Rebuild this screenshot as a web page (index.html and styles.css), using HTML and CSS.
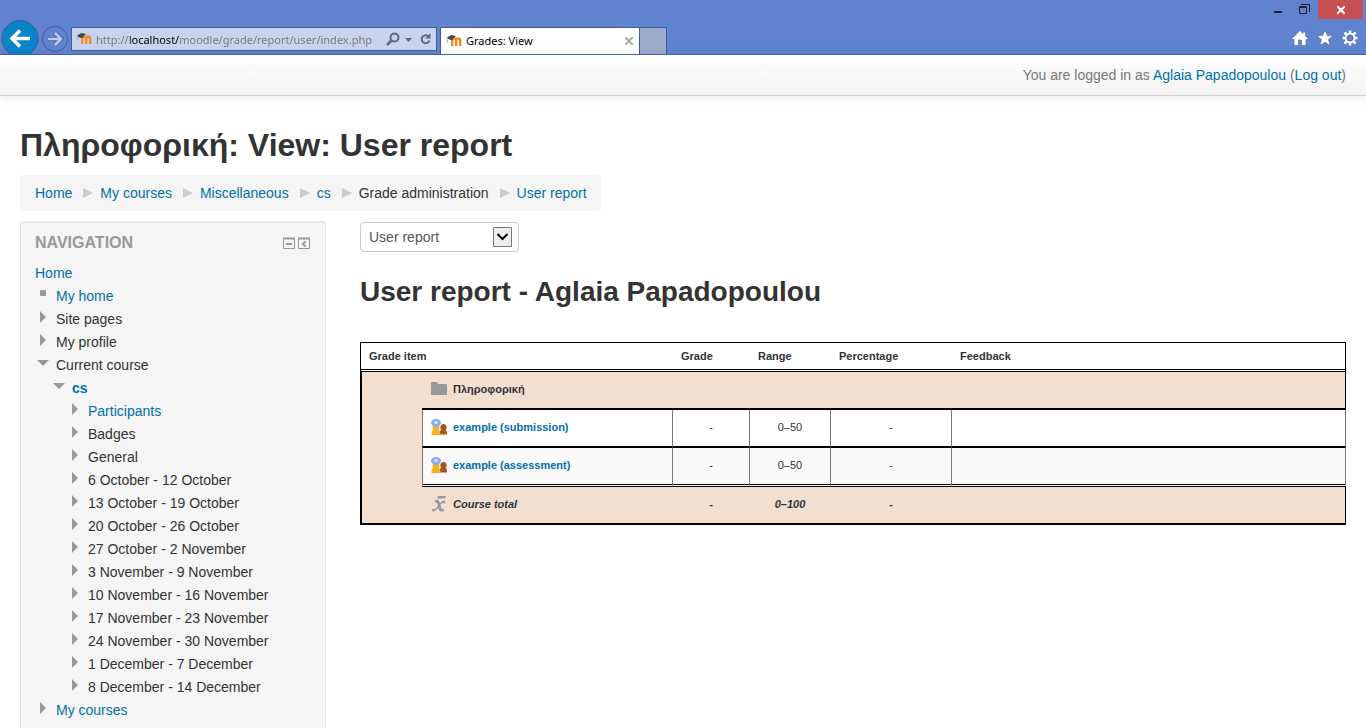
FILE: index.html
```html
<!DOCTYPE html>
<html lang="en">
<head>
    <meta charset="UTF-8">
    <meta name="viewport" content="width=device-width, initial-scale=1.0">
    <title>Grades: View</title>
    <link rel="stylesheet" href="styles.css">
</head>

<body>

    <!-- shared shapes -->
    <svg width="0" height="0" class="defs">
        <symbol id="moodle" viewBox="0 0 16 16">
            <path d="M6.200 13V7.500a2 2 0 0 1 4 0V13M10.200 7.500a2 2 0 0 1 4 0V13" fill="none" stroke="#f58a24" stroke-width="2.400"/>
            <path d="M1 4.500L5.500 2l4.500 1-3 2.500L6.500 7 3 6.500z" fill="#444"/>
            <path d="M1.500 5v5" stroke="#d9a989" fill="none"/>
        </symbol>
        <symbol id="closed" viewBox="0 0 12 12"><path d="M3 0l6 6-6 6z" fill="#999"/></symbol>
        <symbol id="open" viewBox="0 0 12 12"><path d="M0 3h12L6 9z" fill="#999"/></symbol>
        <symbol id="dot" viewBox="0 0 12 12"><rect x="3" y="2" width="6" height="6" rx="1" fill="#999"/></symbol>
        <symbol id="workshop" viewBox="0 0 16 16">
            <path d="M8 15.500c0-3 .500-4 2.500-4.500C8.500 9.500 9 5 12.500 5s4 4.500 2 6c1.500.500 1.500 2 1.500 4.500z" fill="#a8541c"/>
            <path d="M.500 16c0-3 .500-4.500 2-5C.500 9 2 5 5 5s4.500 4 2.500 6C9 11.500 9.500 13 9.500 16z" fill="#f5b21c"/>
            <ellipse cx="5" cy="3.800" rx="5" ry="3.800" fill="#86acee"/>
            <ellipse cx="5" cy="3.500" rx="2" ry="1.500" fill="#d3e2ff"/>
            <path d="M5 7l3 2.500V6z" fill="#86acee"/>
        </symbol>
    </svg>

    <header class="browser">
        <div class="toolbar">
            <button class="back" aria-label="Back">
                <svg width="38" height="34" viewBox="0 0 38 34">
                    <circle cx="19" cy="18.500" r="18" fill="#0a84c8" stroke="#3c5a9a"/>
                    <path d="M29 18.500H12M19 10.500l-8 8 8 8" fill="none" stroke="#fff" stroke-width="3.500"/>
                </svg>
            </button>
            <button class="forward" aria-label="Forward">
                <svg width="28" height="28" viewBox="0 0 28 28">
                    <circle cx="14" cy="13" r="12.500" fill="none" stroke="#3f5da3"/>
                    <path d="M7 13h12M14 7l6 6-6 6" fill="none" stroke="#46609e" stroke-width="4"/>
                    <path d="M7 13h12M14 7l6 6-6 6" fill="none" stroke="#b9cbf2" stroke-width="2.500"/>
                </svg>
            </button>
            <div class="address">
                <svg width="16" height="16"><use href="#moodle"/></svg>
                <input type="text" aria-label="Address" value="http://localhost/moodle/grade/report/user/index.php">
                <button aria-label="Search">
                    <svg width="14" height="14" viewBox="0 0 14 14"><path d="M6 8L1 13" stroke="#5a6a86" stroke-width="2.500"/><circle cx="8.500" cy="5.500" r="4" fill="none" stroke="#5a6a86" stroke-width="2"/></svg>
                </button>
                <button aria-label="Show addresses">
                    <svg width="8" height="14" viewBox="0 0 8 14"><path d="M0 6h7L3.500 10z" fill="#5a6a86"/></svg>
                </button>
                <button class="refresh" aria-label="Refresh">
                    <svg width="12" height="14" viewBox="0 0 12 14"><path d="M8 4A4 4 0 1 0 9.500 8.500" fill="none" stroke="#5a6a86" stroke-width="2"/><path d="M10.500 1v5.500H5z" fill="#5a6a86"/></svg>
                </button>
            </div>
            <div class="tab">
                <svg width="16" height="16"><use href="#moodle"/></svg>
                <span>Grades: View</span>
                <button aria-label="Close tab">
                    <svg width="8" height="8" viewBox="0 0 8 8"><path d="M0 0l8 8M8 0L0 8" stroke="#aaa" stroke-width="2"/></svg>
                </button>
            </div>
            <button class="new-tab" aria-label="New tab"></button>
        </div>
        <div class="window">
            <div class="window-buttons">
                <button aria-label="Minimize">
                    <svg width="26" height="19" viewBox="0 0 26 19"><path d="M8 12h8" stroke="#222" stroke-width="2"/></svg>
                </button>
                <button aria-label="Restore">
                    <svg width="26" height="19" viewBox="0 0 26 19"><path d="M7.500 6.500h7v7h-7zM7 7.500h8" fill="none" stroke="#222"/><path d="M9 4.500h8.500V12" fill="none" stroke="#222"/></svg>
                </button>
                <button class="close" aria-label="Close">
                    <svg width="8" height="8" viewBox="0 0 8 8"><path d="M0 0l8 8M8 0L0 8" stroke="#fff" stroke-width="2"/></svg>
                </button>
            </div>
            <div class="tools">
                <button aria-label="Home page">
                    <svg width="16" height="16" viewBox="0 0 16 16"><path d="M8 .500l3 3V2h2.500v4L16 8.500l-1 1.500-1-1v6.500H9.500V10h-3v5.500H2V9l-1 1-1-1.500z" fill="#fff" stroke="#4a65a4" stroke-width=".600"/></svg>
                </button>
                <button aria-label="Favorites">
                    <svg width="16" height="16" viewBox="0 0 16 16"><path d="M8 0l2.300 5.500 5.700.300-4.400 3.700 1.400 6L8 12.300 3 15.500l1.400-6L0 5.800l5.700-.300z" fill="#fff" stroke="#4a65a4" stroke-width=".600"/></svg>
                </button>
                <button aria-label="Tools">
                    <svg width="16" height="16" viewBox="0 0 16 16"><path d="M8 .500v15M.500 8h15M2.500 2.500l11 11M13.500 2.500l-11 11" stroke="#fff" stroke-width="2.500"/><circle cx="8" cy="8" r="4.300" fill="#5f83ce" stroke="#fff" stroke-width="2"/><circle cx="8" cy="8" r="3" fill="#5f83ce" stroke="#4a65a4" stroke-width=".800"/></svg>
                </button>
            </div>
        </div>
    </header>

    <div class="navbar">
        You are logged in as <a href="#">Aglaia Papadopoulou</a> (<a href="#">Log out</a>)
    </div>

    <div class="page">
        <h1>Πληροφορική: View: User report</h1>

        <ul class="breadcrumb">
            <li><a href="#">Home</a></li>
            <li><a href="#">My courses</a></li>
            <li><a href="#">Miscellaneous</a></li>
            <li><a href="#">cs</a></li>
            <li>Grade administration</li>
            <li><a href="#">User report</a></li>
        </ul>

        <div class="columns">
            <nav class="block">
                <div class="block-title">
                    <h2>Navigation</h2>
                    <button aria-label="Hide Navigation block">
                        <svg width="12" height="12" viewBox="0 0 12 12"><path d="M.500 1.500h11v10H.500z" fill="none" stroke="#999"/><path d="M0 1.500h12M3 7h6" stroke="#999" stroke-width="2"/></svg>
                    </button>
                    <button aria-label="Dock Navigation block">
                        <svg width="12" height="12" viewBox="0 0 12 12"><path d="M.500 1.500h11v10H.500z" fill="none" stroke="#999"/><path d="M0 1.500h12" stroke="#999" stroke-width="2"/><path d="M7.500 4.500L5 7l2.500 2.500" fill="none" stroke="#999" stroke-width="2"/></svg>
                    </button>
                </div>
                <a href="#">Home</a>
                <ul class="tree">
                    <li><svg><use href="#dot"/></svg><a href="#">My home</a></li>
                    <li><svg><use href="#closed"/></svg>Site pages</li>
                    <li><svg><use href="#closed"/></svg>My profile</li>
                    <li><svg><use href="#open"/></svg>Current course
                        <ul>
                            <li><svg><use href="#open"/></svg><a href="#" class="current">cs</a>
                                <ul>
                                    <li><svg><use href="#closed"/></svg><a href="#">Participants</a></li>
                                    <li><svg><use href="#closed"/></svg>Badges</li>
                                    <li><svg><use href="#closed"/></svg>General</li>
                                    <li><svg><use href="#closed"/></svg>6 October - 12 October</li>
                                    <li><svg><use href="#closed"/></svg>13 October - 19 October</li>
                                    <li><svg><use href="#closed"/></svg>20 October - 26 October</li>
                                    <li><svg><use href="#closed"/></svg>27 October - 2 November</li>
                                    <li><svg><use href="#closed"/></svg>3 November - 9 November</li>
                                    <li><svg><use href="#closed"/></svg>10 November - 16 November</li>
                                    <li><svg><use href="#closed"/></svg>17 November - 23 November</li>
                                    <li><svg><use href="#closed"/></svg>24 November - 30 November</li>
                                    <li><svg><use href="#closed"/></svg>1 December - 7 December</li>
                                    <li><svg><use href="#closed"/></svg>8 December - 14 December</li>
                                </ul>
                            </li>
                        </ul>
                    </li>
                    <li><svg><use href="#closed"/></svg><a href="#">My courses</a></li>
                </ul>
            </nav>

            <main>
                <div class="report-select">
                    <select aria-label="Report">
                        <option>User report</option>
                    </select>
                    <svg width="19" height="20" viewBox="0 0 19 20"><path d="M.500 .500h18v19H.500z" fill="#eee" stroke="#777"/><path d="M4.500 7l5 5 5-5" fill="none" stroke="#000" stroke-width="2"/></svg>
                </div>

                <h2>User report - Aglaia Papadopoulou</h2>

                <table>
                    <colgroup>
                        <col class="col-indent">
                        <col class="col-item">
                        <col class="col-grade">
                        <col class="col-range">
                        <col class="col-percentage">
                        <col>
                    </colgroup>
                    <thead>
                        <tr>
                            <th colspan="2">Grade item</th>
                            <th>Grade</th>
                            <th>Range</th>
                            <th>Percentage</th>
                            <th>Feedback</th>
                        </tr>
                    </thead>
                    <tbody>
                        <tr class="category">
                            <td rowspan="4" class="indent"></td>
                            <td colspan="5">
                                <div class="item">
                                    <svg width="16" height="16" viewBox="0 0 16 16"><path d="M0 2l1-1h5l1 2h8l1 1v10H0z" fill="#999"/></svg>
                                    Πληροφορική
                                </div>
                            </td>
                        </tr>
                        <tr class="grade">
                            <td><div class="item"><svg width="16" height="16"><use href="#workshop"/></svg><a href="#">example (submission)</a></div></td>
                            <td>-</td>
                            <td>0–50</td>
                            <td>-</td>
                            <td></td>
                        </tr>
                        <tr class="grade last">
                            <td><div class="item"><svg width="16" height="16"><use href="#workshop"/></svg><a href="#">example (assessment)</a></div></td>
                            <td>-</td>
                            <td>0–50</td>
                            <td>-</td>
                            <td></td>
                        </tr>
                        <tr class="total">
                            <td>
                                <div class="item">
                                    <svg width="16" height="16" viewBox="0 0 16 16"><path d="M7 0h8l-1 2.500H6z" fill="#999"/><path d="M4 5.500c2.500-1 3.500 0 4 3.500s1.500 6.500 4.500 4.500" fill="none" stroke="#999" stroke-width="2.800"/><path d="M13.500 5.500c-2-.500-3 .500-5.500 4s-3.500 5.500-6 5" fill="none" stroke="#999" stroke-width="1.500"/><circle cx="13" cy="6" r="1.500" fill="#999"/><circle cx="2.500" cy="14" r="1.500" fill="#999"/></svg>
                                    Course total
                                </div>
                            </td>
                            <td>-</td>
                            <td>0–100</td>
                            <td>-</td>
                            <td></td>
                        </tr>
                    </tbody>
                </table>
            </main>
        </div>
    </div>

</body>
</html>
```
FILE: styles.css
```css
* {
    box-sizing: border-box;
}

body {
    display: flex;
    flex-direction: column;
    min-height: 100vh;
    margin: 0;
    font-family: "Liberation Sans", Arial, sans-serif;
    font-size: 14px;
    line-height: 20px;
    color: #333;
    background-color: #fff;
}

a {
    color: #0070a8;
    text-decoration: none;
}

button {
    padding: 0;
    border: none;
    background: none;
    font: inherit;
}

svg {
    display: block;
    flex: none;
}

ul {
    list-style: none;
    margin: 0;
    padding: 0;
}

.defs {
    position: absolute;
}

/* Browser window */
.browser {
    display: flex;
    justify-content: space-between;
    height: 55px;
    background-color: #5f83ce;
    border-bottom: 1px solid #4a68b0;
    font-family: "Noto Sans", sans-serif;
    font-size: 11px;
}

.toolbar {
    display: flex;
    align-items: flex-end;
}

.back {
    margin-right: 2px;
    margin-left: 1px;
}

.forward {
    margin-right: 2px;
}

.address {
    display: flex;
    align-items: center;
    gap: 5px;
    width: 366px;
    height: 24px;
    margin: 0 3px 3px 0;
    padding: 0 4px;
    background-color: #c7d4ee;
    border: 1px solid #3f5d9c;
}

/* only the host part of the address is black */
.address input {
    flex: 1;
    min-width: 0;
    margin: 0 -1px;
    padding: 0;
    border: none;
    font-family: "Noto Sans", sans-serif;
    font-size: 11px;
    color: transparent;
    background: linear-gradient(to right, #777 34px, #000 34px, #000 83px, #777 83px);
    -webkit-background-clip: text;
    background-clip: text;
}

.refresh {
    margin-left: 2px;
}

.tab {
    display: flex;
    align-items: center;
    gap: 4px;
    width: 200px;
    height: 27px;
    padding: 0 6px 0 5px;
    background-color: #fff;
    border: 1px solid #3f5d9c;
    border-bottom: none;
    color: #000;
}

.tab span {
    flex: 1;
}

.new-tab {
    width: 27px;
    height: 27px;
    background-color: #9dabca;
    border: 1px solid #3f5d9c;
    border-width: 1px 1px 0 0;
}

.window {
    display: flex;
    flex-direction: column;
    justify-content: space-between;
    align-items: flex-end;
}

.window-buttons {
    display: flex;
    margin-right: 3px;
}

.window-buttons .close {
    display: flex;
    align-items: center;
    justify-content: center;
    width: 45px;
    height: 19px;
    background-color: #c75050;
}

.tools {
    display: flex;
    gap: 9px;
    padding: 0 8px 8px 0;
}

/* Page header */
.navbar {
    height: 41px;
    padding: 10px 20px;
    text-align: right;
    color: #777;
    background-image: linear-gradient(to bottom, #fff, #f2f2f2);
    border-bottom: 1px solid #d4d4d4;
    box-shadow: 0 1px 10px rgba(0, 0, 0, 0.1);
}

.page {
    flex: 1;
    display: flex;
    flex-direction: column;
    align-items: flex-start;
    padding: 29px 20px 0;
}

h1 {
    margin: 0 0 10px;
    font-size: 32px;
    line-height: 40px;
}

.breadcrumb {
    display: flex;
    padding: 8px 14px 8px 15px;
    margin-bottom: 10px;
    background-color: #f5f5f5;
    border-radius: 4px;
}

.breadcrumb li {
    display: flex;
    align-items: center;
}

.breadcrumb li + li::before {
    content: "";
    margin: 0 7px 0 11px;
    border: 5px solid transparent;
    border-left: 10px solid #ccc;
    border-right: none;
}

.columns {
    flex: 1;
    display: flex;
    gap: 34px;
    width: 100%;
}

/* Navigation block */
.block {
    width: 306px;
    flex: none;
    padding: 11px 14px 0;
    background-color: #f5f5f5;
    border: 1px solid #e3e3e3;
    border-bottom: none;
    border-radius: 4px 4px 0 0;
    box-shadow: inset 0 1px 1px rgba(0, 0, 0, 0.05);
    line-height: 23px;
}

.block-title {
    display: flex;
    align-items: center;
    gap: 3px;
    height: 20px;
    margin: 0 1px 9px 0;
}

.block-title h2 {
    flex: 1;
    margin: 0;
    font-size: 16px;
    line-height: 20px;
    text-transform: uppercase;
    color: #999;
}

.tree {
    padding-left: 21px;
}

.tree ul {
    padding-left: 16px;
}

/* arrows hang to the left of the item's text */
.tree li svg {
    float: left;
    width: 12px;
    height: 12px;
    margin: 3px 0 0 -19px;
}

.tree .current {
    font-weight: bold;
}

/* Report */
main {
    flex: 1;
    min-width: 0;
    padding-top: 1px;
}

.report-select {
    position: relative;
    width: 159px;
}

.report-select select {
    display: block;
    width: 100%;
    height: 30px;
    padding: 4px 8px;
    appearance: none;
    border: 1px solid #ccc;
    border-radius: 4px;
    background-color: #fff;
    font: inherit;
    color: #555;
}

.report-select svg {
    position: absolute;
    top: 5px;
    right: 7px;
    pointer-events: none;
}

main h2 {
    margin: 20px 0 30px;
    font-size: 28px;
    line-height: 40px;
}

table {
    width: 100%;
    table-layout: fixed;
    border-collapse: separate;
    border-spacing: 0;
    font-size: 11px;
    line-height: 20px;
}

.col-indent {
    width: 62px;
}

.col-item {
    width: 250px;
}

.col-grade {
    width: 77px;
}

.col-range {
    width: 81px;
}

.col-percentage {
    width: 121px;
}

th {
    height: 30px;
    padding: 0 9px;
    text-align: left;
    border-top: 1px solid #000;
    border-bottom: 3px double #000;
    background-color: #fff;
}

th:first-child {
    border-left: 1px solid #000;
    padding-left: 8px;
}

th:last-child {
    border-right: 1px solid #000;
}

td {
    height: 38px;
    padding: 0 8px 2px;
    text-align: center;
}

.item {
    display: flex;
    align-items: center;
    gap: 6px;
    font-weight: bold;
}

.indent {
    background-color: #f2dfd0;
    border-left: 2px solid #000;
    border-bottom: 2px solid #000;
}

.category td {
    background-color: #f2dfd0;
    padding-left: 9px;
}

.category td:last-child {
    border-right: 1px solid #000;
    border-bottom: 2px solid #000;
}

.grade td {
    border-left: 1px solid #777;
    border-bottom: 2px solid #000;
}

.grade td:last-child {
    border-right: 1px solid #777;
}

.last td {
    height: 39px;
    background-color: #f9f9f9;
    border-bottom: 3px double #000;
}

.total td {
    padding-left: 9px;
    background-color: #f2dfd0;
    border-bottom: 2px solid #000;
    font-weight: bold;
    font-style: italic;
}

.total td:last-child {
    border-right: 1px solid #000;
}
```
